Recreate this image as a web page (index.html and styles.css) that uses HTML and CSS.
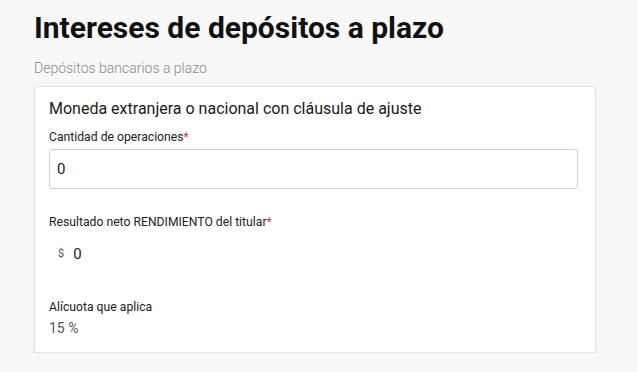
FILE: index.html
```html
<!DOCTYPE html>
<html lang="es">
<head>
    <meta charset="UTF-8">
    <meta name="viewport" content="width=device-width, initial-scale=1.0">
    <title>Intereses de depósitos a plazo</title>
    <link rel="stylesheet" href="styles.css">
</head>
<body>
    <div class="page">
        <h1 class="title">Intereses de depósitos a plazo</h1>
        <p class="subtitle">Depósitos bancarios a plazo</p>

        <div class="card">
            <h2 class="card-title">Moneda extranjera o nacional con cláusula de ajuste</h2>

            <div class="field">
                <label for="cantidad" class="label">Cantidad de operaciones<span class="req">*</span></label>
                <input type="text" id="cantidad" class="input-text" value="0">
            </div>

            <div class="field field-result">
                <span class="label">Resultado neto RENDIMIENTO del titular<span class="req">*</span></span>
                <div class="amount">
                    <span class="currency">$</span>
                    <span class="amount-value">0</span>
                </div>
            </div>

            <div class="field field-rate">
                <span class="label">Alícuota que aplica</span>
                <div class="rate">15 %</div>
            </div>
        </div>
    </div>
</body>
</html>
```

FILE: styles.css
```css
/* base */
body {
    font-family: Roboto, "Liberation Sans", Arial, sans-serif;
    background-color: #f8f8f8;
    color: #222;
    margin: 0;
    padding: 0;
}

.page {
    padding: 8px 41px 0 34px;
}

.title {
    font-size: 30px;
    font-weight: 700;
    color: #111;
    margin: 0;
    line-height: 40px;
}

.subtitle {
    font-size: 14px;
    font-weight: 300;
    color: #8a8a8a;
    margin: 12px 0 0;
    line-height: 16px;
}

.card {
    margin-top: 10px;
    background-color: #fff;
    border: 1px solid #e4e4e4;
    border-radius: 3px;
    box-shadow: 0 1px 2px rgba(0, 0, 0, 0.12);
    padding: 10px 17px 15px 14px;
}

.card-title {
    font-size: 16px;
    font-weight: 400;
    color: #1a1a1a;
    margin: 0;
    line-height: 24px;
}

.field {
    margin-top: 8px;
}

.label {
    display: block;
    font-size: 12.2px;
    color: #222;
    line-height: 16px;
    margin-bottom: 4px;
}

.req {
    color: #e53935;
}

.input-text {
    display: block;
    box-sizing: border-box;
    width: 100%;
    height: 40px;
    padding: 0 7px;
    border: 1px solid #cfcfcf;
    border-radius: 3px;
    font-family: inherit;
    font-size: 15px;
    color: #222;
    background-color: #fff;
}

.field-result {
    margin-top: 25px;
}

.amount {
    display: flex;
    align-items: baseline;
    gap: 9px;
    padding: 11px 0 0 9px;
}

.currency {
    font-size: 11px;
    color: #555;
    position: relative;
    top: -2px;
}

.amount-value {
    font-size: 15px;
    color: #222;
}

.field-rate {
    margin-top: 36px;
}

.rate {
    font-size: 14px;
    color: #555;
    line-height: 18px;
    margin-top: 2px;
}
```
